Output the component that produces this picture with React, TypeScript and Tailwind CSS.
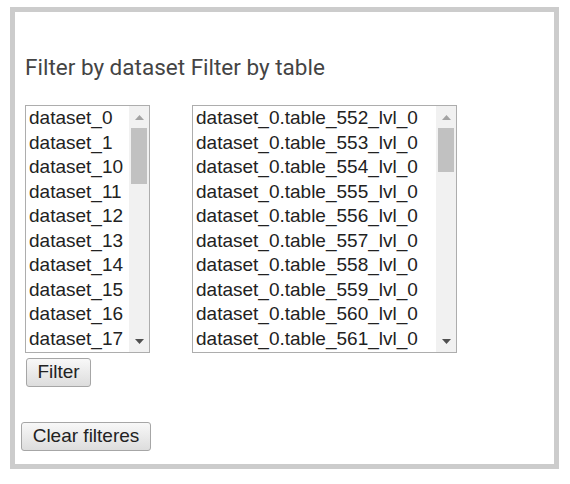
import React from "react";

// ── Data ─────────────────────────────────────────────────────
const DATASETS = [
  "dataset_0", "dataset_1", "dataset_10", "dataset_11", "dataset_12",
  "dataset_13", "dataset_14", "dataset_15", "dataset_16", "dataset_17",
];

const TABLES = Array.from({ length: 10 }, (_, i) => `dataset_0.table_${552 + i}_lvl_0`);

// ── Fake native scrollbar ────────────────────────────────────
function Scrollbar({ thumb }: { thumb: number }) {
  return (
    <div className="w-[20px] shrink-0 bg-[#f1f1f1] flex flex-col">
      <div className="h-[22px] flex items-center justify-center">
        <svg width="9" height="5" viewBox="0 0 9 5">
          <polygon points="4.5,0 9,5 0,5" fill="#a3a3a3" />
        </svg>
      </div>
      <div className="mx-[2px] bg-[#c1c1c1]" style={{ height: thumb }} />
      <div className="flex-1" />
      <div className="h-[22px] flex items-center justify-center">
        <svg width="9" height="5" viewBox="0 0 9 5">
          <polygon points="0,0 9,0 4.5,5" fill="#505050" />
        </svg>
      </div>
    </div>
  );
}

// ── List box ─────────────────────────────────────────────────
function ListBox({ items, width, thumb }: { items: string[]; width: string; thumb: number }) {
  return (
    <div className={`${width} h-[248px] border border-[#adadad] bg-white flex`}>
      <div className="flex-1 min-w-0 overflow-hidden">
        {items.map((it) => (
          <div key={it} className="h-[24.5px] leading-[24.5px] pl-[3px] text-[19px] text-[#222] whitespace-nowrap">
            {it}
          </div>
        ))}
      </div>
      <Scrollbar thumb={thumb} />
    </div>
  );
}

function Button({ children, className }: { children: React.ReactNode; className: string }) {
  return (
    <button
      className={`${className} h-[29px] flex items-center justify-center rounded-[3px] border border-[#a6a6a6] bg-gradient-to-b from-[#f8f8f8] to-[#dddddd] text-[19px] text-[#222]`}
    >
      {children}
    </button>
  );
}

export default function App() {
  return (
    <div className="w-[570px] h-[484px] bg-white pt-[7px] pl-[10px]" style={{ fontFamily: "'Liberation Sans', Arial, sans-serif" }}>
      <div className="w-[549px] h-[462px] border-[5px] border-[#cccccc] flex flex-col">
        <h2
          className="mt-[42px] ml-[10px] text-[22.5px] leading-[26px] text-[#444] font-normal"
          style={{ fontFamily: "Roboto, sans-serif" }}
        >
          Filter by dataset Filter by table
        </h2>

        <div className="mt-[25px] ml-[10px] flex gap-[42px]">
          <ListBox items={DATASETS} width="w-[125px]" thumb={56} />
          <ListBox items={TABLES} width="w-[265px]" thumb={44} />
        </div>

        <Button className="mt-[5px] ml-[11px] w-[65px]">Filter</Button>
        <Button className="mt-[35px] ml-[6px] w-[130px]">Clear filteres</Button>
      </div>
    </div>
  );
}
